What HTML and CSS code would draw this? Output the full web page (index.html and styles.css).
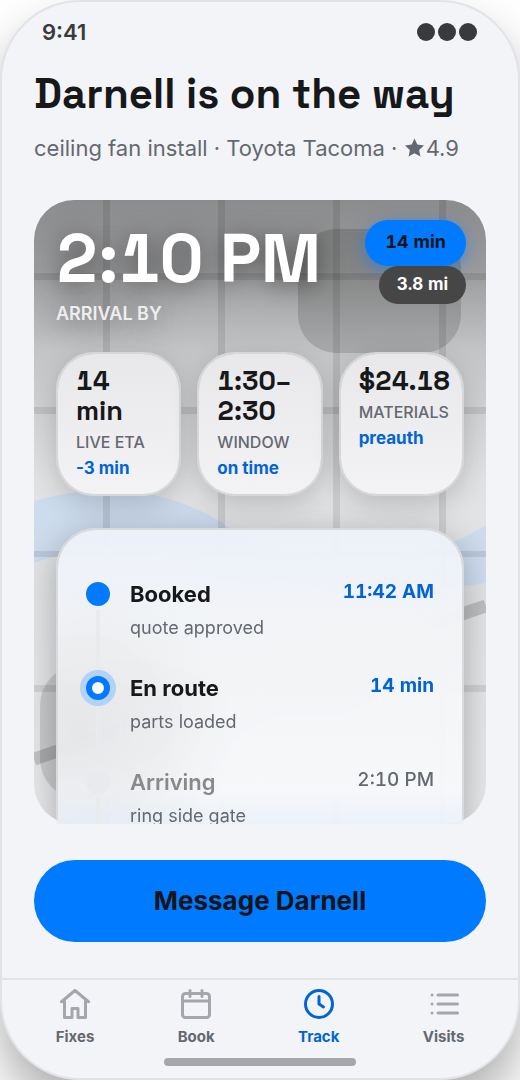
FILE: index.html
```html
<!DOCTYPE html>
<html lang="en">
<head>
<meta charset="utf-8">
<meta name="viewport" content="width=device-width, initial-scale=1">
<title>Darnell is on the way</title>
<link rel="stylesheet" href="styles.css">
</head>
<body>
<div class="phone">
  <div class="status">
    <span>9:41</span>
    <svg class="status-dots" viewBox="0 0 60 18" aria-hidden="true"><circle cx="9" cy="9" r="9"/><circle cx="30" cy="9" r="9"/><circle cx="51" cy="9" r="9"/></svg>
  </div>
  <header class="header">
    <h1 class="title">Darnell is on the way</h1>
    <p class="subtitle">ceiling fan install · Toyota Tacoma · <svg class="star" viewBox="0 0 22 20" role="img" aria-label="rating"><path d="M10.500 .6l2.800 6 6.700.8-4.900 4.600 1.300 6.600-5.900-3.300-5.900 3.300 1.300-6.600L1 7.400l6.700-.8z"/></svg>4.9</p>
  </header>
  <main class="live">
    <svg class="map" viewBox="0 0 452 624" preserveAspectRatio="none" aria-hidden="true">
      <defs>
        <linearGradient id="shade" x1="0" y1="0" x2="0" y2="1">
          <stop offset="0" stop-color="#000" stop-opacity=".4"/>
          <stop offset=".11" stop-color="#000" stop-opacity=".34"/>
          <stop offset=".24" stop-color="#000" stop-opacity=".16"/>
          <stop offset=".45" stop-color="#000" stop-opacity=".03"/>
          <stop offset="1" stop-color="#000" stop-opacity="0"/>
        </linearGradient>
      </defs>
      <rect width="452" height="624" fill="#e8e9eb"/>
      <path d="M0 301C70 281 140 289 196 328C270 376 370 376 452 325V383C340 398 250 400 180 372C110 342 50 345 0 363Z" fill="#d3e2f4"/>
      <g fill="#000" fill-opacity=".09">
        <rect x="69" width="7" height="624"/><rect x="184" width="7" height="624"/><rect x="299" width="7" height="624"/><rect x="405" width="7" height="624"/>
        <rect y="73" width="452" height="7"/><rect y="207" width="452" height="7"/><rect y="351" width="452" height="6"/><rect y="485" width="452" height="7"/>
      </g>
      <path d="M0 559L452 406" stroke="#000" stroke-opacity=".16" stroke-width="13"/>
      <rect x="264" y="29" width="163" height="124" rx="38" fill="#000" fill-opacity=".14"/>
      <rect x="6" y="465" width="150" height="134" rx="40" fill="#000" fill-opacity=".12"/>
      <rect width="452" height="624" fill="url(#shade)"/>
    </svg>
    <div class="hero">
      <div>
        <div class="arrival">2:10 PM</div>
        <div class="arrival-label">ARRIVAL BY</div>
      </div>
      <div class="pills">
        <span class="pill pill-eta">14 min</span>
        <span class="pill pill-distance">3.8 mi</span>
      </div>
    </div>
    <div class="stats">
      <div class="stat"><div class="stat-value">14 min</div><div class="stat-label">LIVE ETA</div><div class="stat-note">-3 min</div></div>
      <div class="stat"><div class="stat-value">1:30–2:30</div><div class="stat-label">WINDOW</div><div class="stat-note">on time</div></div>
      <div class="stat"><div class="stat-value">$24.18</div><div class="stat-label">MATERIALS</div><div class="stat-note">preauth</div></div>
    </div>
    <ol class="steps">
      <li class="step"><span class="rail"><i class="dot"></i></span><div class="step-body"><div class="step-name">Booked</div><div class="step-detail">quote approved</div></div><time class="step-time">11:42 AM</time></li>
      <li class="step"><span class="rail"><i class="dot current"></i></span><div class="step-body"><div class="step-name">En route</div><div class="step-detail">parts loaded</div></div><time class="step-time">14 min</time></li>
      <li class="step pending"><span class="rail"><i class="dot"></i></span><div class="step-body"><div class="step-name">Arriving</div><div class="step-detail">ring side gate</div></div><time class="step-time">2:10 PM</time></li>
    </ol>
  </main>
  <button class="message" type="button">Message Darnell</button>
  <footer class="footer">
    <nav class="tabs" aria-label="Main">
      <a class="tab" href="#fixes"><svg class="icon" viewBox="0 0 24 24" aria-hidden="true"><path d="M3 10.500 12 3l9 7.500M5 9v12h5v-6h4v6h5V9"/></svg>Fixes</a>
      <a class="tab" href="#book"><svg class="icon" viewBox="0 0 24 24" aria-hidden="true"><rect x="3" y="5" width="18" height="16" rx="2"/><path d="M3 10h18M8 3v4M16 3v4"/></svg>Book</a>
      <a class="tab active" href="#track" aria-current="page"><svg class="icon" viewBox="0 0 24 24" aria-hidden="true"><circle cx="12" cy="12" r="9"/><path d="M12 7v5l3 2"/></svg>Track</a>
      <a class="tab" href="#visits"><svg class="icon" viewBox="0 0 24 24" aria-hidden="true"><path d="M8 6h13M8 12h13M8 18h13M4 6h.01M4 12h.01M4 18h.01"/></svg>Visits</a>
    </nav>
    <div class="home-bar"></div>
  </footer>
</div>
</body>
</html>
```

FILE: styles.css
```css
* { box-sizing: border-box; }
html { background: #fff; }
body {
  margin: 0;
  overflow: hidden;
  font-family: Inter, "Liberation Sans", sans-serif;
  color: #17181a;
}
h1, p, ol { margin: 0; padding: 0; }
.phone {
  height: calc(100vh - 2px);
  display: flex;
  flex-direction: column;
  background: #f3f4f7;
  border: 2px solid #e2e3e7;
  border-radius: 80px;
  box-shadow: 0 28px 50px rgba(0, 0, 0, .32);
  overflow: hidden;
}
.status {
  display: flex;
  justify-content: space-between;
  align-items: center;
  height: 60px;
  padding: 0 41px 0 40px;
  font-size: 22px;
  font-weight: 600;
  color: #393a3c;
}
.status-dots { width: 60px; height: 18px; fill: currentColor; }
.header { padding: 6px 32px 0; }
.title {
  font-family: "Space Grotesk", Inter, sans-serif;
  font-size: 42px;
  line-height: 52px;
  font-weight: 700;
  white-space: nowrap;
}
.subtitle {
  margin-top: 12px;
  font-size: 22px;
  line-height: 32px;
  color: #646871;
  white-space: nowrap;
}
.star { width: 22px; height: 20px; fill: currentColor; vertical-align: -2px; }
.live {
  position: relative;
  flex: 1;
  min-height: 0;
  margin: 36px 32px 0;
  padding: 20px 22px 0;
  border-radius: 40px;
  overflow: hidden;
}
.map {
  position: absolute;
  inset: 0;
  width: 100%;
  height: 100%;
}
.arrival, .pill, .stat-value, .step-time { font-variant-numeric: tabular-nums; }
.hero {
  position: relative;
  display: flex;
  justify-content: space-between;
  height: 132px;
  color: #fff;
  text-shadow: 0 4px 24px rgba(0, 0, 0, .5);
}
.arrival {
  font-family: "Space Grotesk", Inter, sans-serif;
  font-size: 68px;
  line-height: 78px;
  font-weight: 700;
  white-space: nowrap;
}
.arrival-label {
  margin-top: 4px;
  font-size: 18px;
  line-height: 24px;
  font-weight: 600;
  color: #eeeeef;
}
.pills {
  display: flex;
  flex-direction: column;
  align-items: flex-end;
  margin-right: -2px;
  text-shadow: none;
}
.pill { border-radius: 24px; font-weight: 700; white-space: nowrap; }
.pill-eta {
  padding: 10px 20px 12px;
  font-size: 18px;
  line-height: 24px;
  background: #007aff;
  color: #14151a;
  box-shadow: 0 4px 16px rgba(0, 122, 255, .5);
}
.pill-distance {
  position: relative;
  padding: 6px 18px 8px;
  font-size: 17px;
  line-height: 24px;
  background: #464646;
}
.stats {
  position: relative;
  display: grid;
  grid-template-columns: repeat(3, minmax(0, 1fr));
  gap: 16px;
}
.stat {
  min-height: 144px;
  padding: 12px 10px 12px 18px;
  border: 2px solid #d6d7d9;
  border-radius: 38px;
  background: linear-gradient(#e8e8ea, #f3f3f6);
  background-clip: padding-box;
  box-shadow: 0 8px 28px rgba(0, 0, 0, .18);
}
.stat-value {
  font-family: "Space Grotesk", Inter, sans-serif;
  font-size: 27px;
  line-height: 30px;
  font-weight: 700;
  max-width: 80px;
}
.stat-label { margin-top: 4px; font-size: 16px; line-height: 24px; font-weight: 500; color: #646871; }
.stat-note { margin-top: 2px; font-size: 17px; line-height: 24px; font-weight: 700; color: #0064d6; }
.steps {
  position: relative;
  margin-top: 32px;
  padding: 48px 28px 28px;
  list-style: none;
  border: 2px solid #d8dade;
  border-radius: 40px;
  background:
    radial-gradient(circle at 20px 200px, rgba(0, 0, 0, .05), transparent 160px),
    linear-gradient(rgba(238, 243, 251, .9), rgba(245, 246, 248, .9) 110px, rgba(248, 249, 251, .9) 260px, rgba(235, 242, 252, .9) 296px);
  background-clip: padding-box;
  backdrop-filter: blur(28px);
  box-shadow: 0 8px 36px rgba(0, 0, 0, .28);
}
.step { display: flex; height: 94px; }
.rail {
  width: 24px;
  margin-right: 20px;
  display: flex;
  flex-direction: column;
  align-items: center;
  padding-top: 4px;
  gap: 4px;
}
.rail::after { content: ""; flex: 1; width: 4px; background: #e9eaee; }
.dot { position: relative; z-index: 1; width: 24px; height: 24px; border-radius: 50%; background: #007aff; }
.dot.current { background: #fff; border: 6px solid #007aff; box-shadow: 0 0 0 6px #b3d2f4; }
.pending .dot { background: #e9eaee; }
.step-body { flex: 1; }
.step-name { font-size: 22px; line-height: 32px; font-weight: 700; }
.pending .step-name { color: #88898b; }
.step-detail { margin-top: 6px; font-size: 18px; line-height: 24px; color: #646871; }
.step-time { font-size: 19px; line-height: 28px; font-weight: 700; color: #0064d6; }
.pending .step-name { font-weight: 600; }
.pending .step-time { font-weight: 500; color: #646871; }
.message {
  margin: 36px 32px;
  height: 82px;
  flex: none;
  border: 0;
  border-radius: 41px;
  background: #007aff;
  color: #14151a;
  font: 700 26px/32px Inter, sans-serif;
}
.footer { border-top: 2px solid #e2e3e7; padding: 6px 12px 12px; }
.tabs { display: flex; justify-content: space-around; }
.tab {
  display: flex;
  flex-direction: column;
  align-items: center;
  gap: 4px;
  font-size: 15px;
  line-height: 22px;
  font-weight: 700;
  color: #646871;
  text-decoration: none;
}
.icon {
  width: 36px;
  height: 36px;
  fill: none;
  stroke: #a5a6ad;
  stroke-width: 2;
  stroke-linecap: round;
  stroke-linejoin: round;
}
.tab.active { color: #0064d6; }
.active .icon { stroke: #0064d6; }
.home-bar { width: 192px; height: 8px; margin: 10px auto 0; border-radius: 4px; background: #a6a7a9; }
```
